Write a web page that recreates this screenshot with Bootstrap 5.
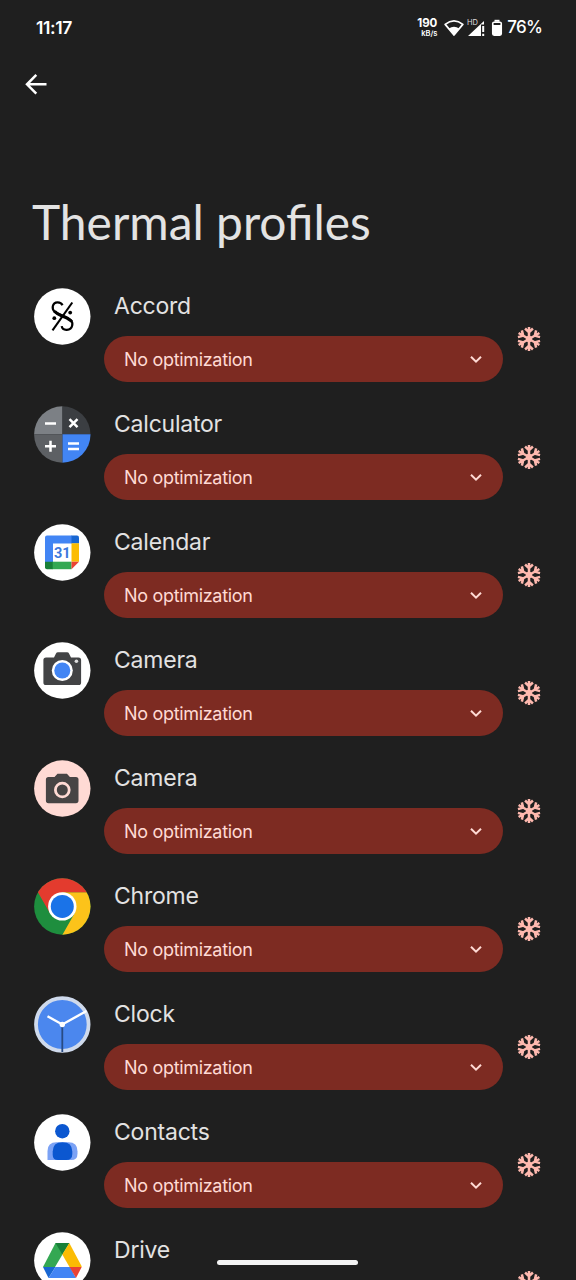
<!DOCTYPE html>
<html lang="en">
<head>
<meta charset="utf-8">
<meta name="viewport" content="width=device-width, initial-scale=1">
<title>Thermal profiles</title>
<link href="https://cdn.jsdelivr.net/npm/bootstrap@5.3.0/dist/css/bootstrap.min.css" rel="stylesheet">
<style>
html,body{height:100%;overflow:hidden}
body{background:#1f1f1f;color:#e3e2e2;font-family:Inter,"Liberation Sans",sans-serif}
svg{display:block;flex:none}
.screen{height:1280px;width:576px}
.statusbar{height:54px;padding:2px 34px 0 36px;color:#fff}
.clock{font-size:17.5px;font-weight:600;letter-spacing:-.4px}
.pct{font-size:17px;font-weight:500;letter-spacing:-.8px;margin-left:4px}
.net{font-size:11.5px;line-height:11px;font-weight:700;text-align:right;margin:1px 7px 0 0}
.net-unit{display:block;font-size:7.5px;line-height:10px;font-weight:600}
.toolbar{height:60px;padding-left:24px}
.title{height:174px;padding:85px 0 0 32px;font-family:Lato,sans-serif;font-size:47.9px;line-height:46px;font-weight:400;color:#e3e3e3;white-space:nowrap}
.app-row{height:118px;padding-left:34px}
.app-body{width:399px;margin-left:13px}
.app-name{height:48px;line-height:36px;padding-left:10px;font-size:23px;font-weight:400;letter-spacing:-.22px;white-space:nowrap}
.picker{height:46px;border:0;border-radius:23px;background:#7d2b22;color:#ffdad4;padding:0 20px;font-size:18px;letter-spacing:-.32px}
.flake{margin:39px 0 0 14px;color:#ffb9af}
.home{left:217px;top:1260px;width:141px;height:5px;background:#f4f4f4}
</style>
</head>
<body>
<svg width="0" height="0" class="position-absolute">
<symbol id="flake" viewBox="-12 -12 24 24"><g fill="none" stroke="currentColor" stroke-width="2.5">
<g id="arm"><path d="M0 0V-12M-3.900-10.500L0-6.700L3.900-10.500"/></g>
<use href="#arm" transform="rotate(60)"/><use href="#arm" transform="rotate(120)"/><use href="#arm" transform="rotate(180)"/><use href="#arm" transform="rotate(240)"/><use href="#arm" transform="rotate(300)"/></g><circle r="3.200" fill="currentColor"/></symbol>
<symbol id="chev" viewBox="0 0 14 10"><path d="M2 2.700l5 5 5-5" fill="none" stroke="#ffdad4" stroke-width="2"/></symbol>
</svg>
<div class="screen position-relative overflow-hidden">
<header class="statusbar d-flex align-items-center">
<span class="clock me-auto">11:17</span>
<div class="net">190<span class="net-unit">kB/s</span></div>
<svg width="20" height="18" viewBox="0 0 20 18"><path d="M1.200 5.400Q10-1.600 18.800 5.400L10 16z" fill="none" stroke="#fff" stroke-width="1.800" stroke-linejoin="round"/><path d="M4.800 9.400Q10 6 15.200 9.400L10 16z" fill="#fff"/></svg>
<svg width="20" height="18" viewBox="0 0 20 18" style="margin-left:3px"><path d="M1 17L17 2v3.500h-3V17z" fill="#fff"/><path d="M0 0h11v7H0z" fill="#1f1f1f"/><path d="M15.200 7h2v6h-2zM15.200 14.800h2V17h-2z" fill="#fff"/><text x="0" y="6.300" font-family="Inter" font-size="7.500" fill="#ddd">HD</text></svg>
<svg width="12" height="18" viewBox="0 0 12 18" class="ms-1"><path d="M3.500 .8h5v2h-5z" fill="#fff"/><rect x="1.700" y="3.200" width="8.600" height="13" rx="1.400" fill="#fff" stroke="#fff" stroke-width="1.500"/><path d="M2.600 4h6.800v2H2.600z" fill="#1f1f1f"/></svg>
<span class="pct">76%</span>
</header>
<div class="toolbar d-flex align-items-center"><svg width="24" height="24" viewBox="0 0 24 24"><path d="M22.500 12.300H3.200M12.300 2.900L3 12.300l9.300 9.400" fill="none" stroke="#fff" stroke-width="2.500"/></svg></div>
<h1 class="title m-0">Thermal profiles</h1>
<main>
<section class="app-row d-flex align-items-start">
<svg width="57" height="57" viewBox="0 0 57 57"><circle cx="28.300" cy="28.500" r="28.200" fill="#fff"/><g fill="none" stroke="#000"><path d="M28.500 17.200C27 13.700 20 12.800 18.800 18.200C17.700 24.300 24 25.500 29 28C35 31 39.400 32 38.200 37.500C37 43 28.500 43.300 27.700 38.200" stroke-width="2.200"/><path d="M20.500 23.200C23 26 26 26.800 29.500 28.500C33 30.100 36 31.200 37.600 33.700" stroke-width="3.200"/><path d="M38.300 14.500L18.500 42.300" stroke-width="2.100"/></g><circle cx="20.300" cy="30.200" r="1.900"/><circle cx="36.200" cy="24.600" r="1.900"/></svg>
<div class="app-body"><div class="app-name">Accord</div><button class="picker w-100 d-flex align-items-center justify-content-between"><span>No optimization</span><svg width="14" height="10"><use href="#chev"/></svg></button></div>
<svg class="flake" width="24" height="24"><use href="#flake"/></svg>
</section>
<section class="app-row d-flex align-items-start">
<svg width="57" height="57" viewBox="0 0 57 57"><clipPath id="disc"><circle cx="28.300" cy="28.500" r="28.200"/></clipPath><g clip-path="url(#disc)"><path d="M0 0h28.500v28.200H0z" fill="#7c8085"/><path d="M28.500 0H57v28.200H28.500z" fill="#3b3e42"/><path d="M0 28.200h28.500V57H0z" fill="#5d6064"/><path d="M28.500 28.200H57V57H28.500z" fill="#4285f4"/></g><path d="M11 17.500h11M35.500 13.200l8 8m0-8l-8 8M11 40.200h11M16.500 34.700v11M34 37.400h11M34 43h11" stroke="#fff" stroke-width="2.500"/></svg>
<div class="app-body"><div class="app-name">Calculator</div><button class="picker w-100 d-flex align-items-center justify-content-between"><span>No optimization</span><svg width="14" height="10"><use href="#chev"/></svg></button></div>
<svg class="flake" width="24" height="24"><use href="#flake"/></svg>
</section>
<section class="app-row d-flex align-items-start">
<svg width="57" height="57" viewBox="0 0 57 57"><circle cx="28.300" cy="28.500" r="28.200" fill="#fff"/><path d="M13 11.500h25v8H19v19h-8v-25a2 2 0 0 1 2-2z" fill="#4285f4"/><path d="M37.500 11.500H43a2 2 0 0 1 2 2v6h-7.500z" fill="#1967d2"/><path d="M37.500 19.300H45v18.400h-7.500z" fill="#fbbc04"/><path d="M11 37.700h8v7.500h-6a2 2 0 0 1-2-2z" fill="#188038"/><path d="M18.700 37.700h18.800v7.500H18.700z" fill="#34a853"/><path d="M37.500 37.700H45l-7.500 7.500z" fill="#ea4335"/><text x="28.300" y="33.800" text-anchor="middle" font-family="Roboto" font-weight="700" font-size="14.500" fill="#3c78dc">31</text></svg>
<div class="app-body"><div class="app-name">Calendar</div><button class="picker w-100 d-flex align-items-center justify-content-between"><span>No optimization</span><svg width="14" height="10"><use href="#chev"/></svg></button></div>
<svg class="flake" width="24" height="24"><use href="#flake"/></svg>
</section>
<section class="app-row d-flex align-items-start">
<svg width="57" height="57" viewBox="0 0 57 57"><circle cx="28.300" cy="28.500" r="28.200" fill="#fff"/><path d="M12 15.500h8l2-4q.5-1.300 2-1.300h9q1.500 0 2 1.300l2 4h7.500q2.600 0 2.600 2.600v22.300q0 2.600-2.600 2.600H12q-2.600 0-2.600-2.600V18.100q0-2.600 2.600-2.600z" fill="#424345"/><circle cx="28.300" cy="28.500" r="10.500" fill="#fff"/><circle cx="28.300" cy="28.500" r="8" fill="#4285f4"/><circle cx="42.400" cy="19.300" r="1.800" fill="#ddd"/></svg>
<div class="app-body"><div class="app-name">Camera</div><button class="picker w-100 d-flex align-items-center justify-content-between"><span>No optimization</span><svg width="14" height="10"><use href="#chev"/></svg></button></div>
<svg class="flake" width="24" height="24"><use href="#flake"/></svg>
</section>
<section class="app-row d-flex align-items-start">
<svg width="57" height="57" viewBox="0 0 57 57"><circle cx="28.300" cy="28.500" r="28.200" fill="#ffdad4"/><path d="M14.500 17h6l3-3.300h9.400l3 3.300h6q2.600 0 2.600 2.600v21q0 2.600-2.600 2.600H14.500q-2.600 0-2.600-2.600v-21q0-2.600 2.600-2.600z" fill="#474444"/><circle cx="28.300" cy="30" r="6.900" fill="none" stroke="#ffdad4" stroke-width="2.800"/></svg>
<div class="app-body"><div class="app-name">Camera</div><button class="picker w-100 d-flex align-items-center justify-content-between"><span>No optimization</span><svg width="14" height="10"><use href="#chev"/></svg></button></div>
<svg class="flake" width="24" height="24"><use href="#flake"/></svg>
</section>
<section class="app-row d-flex align-items-start">
<svg width="57" height="57" viewBox="0 0 57 57"><g clip-path="url(#disc)"><path d="M0 0h57v57H0z" fill="#1e8e3e"/><path d="M28.300 14.200H57V57H28.300L40.500 35.500z" fill="#fcc31a"/><path d="M3.900 14.200L0 0h57v14.200H28.300L16.100 35.500z" fill="#e33b2e"/></g><circle cx="28.300" cy="28.400" r="14.200" fill="#fff"/><circle cx="28.300" cy="28.400" r="11.500" fill="#1a73e8"/></svg>
<div class="app-body"><div class="app-name">Chrome</div><button class="picker w-100 d-flex align-items-center justify-content-between"><span>No optimization</span><svg width="14" height="10"><use href="#chev"/></svg></button></div>
<svg class="flake" width="24" height="24"><use href="#flake"/></svg>
</section>
<section class="app-row d-flex align-items-start">
<svg width="57" height="57" viewBox="0 0 57 57"><circle cx="28.300" cy="28.500" r="26.300" fill="#4b87ee" stroke="#cfdaec" stroke-width="3.800"/><path d="M28.300 28.500V56" stroke="#284b83" stroke-width="1.800"/><path d="M13.500 20.300l14.800 8.200L52.500 15" fill="none" stroke="#fff" stroke-width="2.400"/><circle cx="28.300" cy="28.500" r="2.700" fill="#fff"/></svg>
<div class="app-body"><div class="app-name">Clock</div><button class="picker w-100 d-flex align-items-center justify-content-between"><span>No optimization</span><svg width="14" height="10"><use href="#chev"/></svg></button></div>
<svg class="flake" width="24" height="24"><use href="#flake"/></svg>
</section>
<section class="app-row d-flex align-items-start">
<svg width="57" height="57" viewBox="0 0 57 57"><circle cx="28.300" cy="28.500" r="28.200" fill="#fff"/><path d="M13.500 46V37q0-8.800 9-8.800h12q9 0 9 9v2.500q0 6.300-6.300 6.300z" fill="#7ba2f5"/><path d="M18.700 37.500q0-9.300 9.800-9.300t9.800 9.300V40q0 6-6 6H24q-5.300 0-5.300-5z" fill="#0b57d0"/><circle cx="28.300" cy="17.200" r="7.200" fill="#0b57d0"/></svg>
<div class="app-body"><div class="app-name">Contacts</div><button class="picker w-100 d-flex align-items-center justify-content-between"><span>No optimization</span><svg width="14" height="10"><use href="#chev"/></svg></button></div>
<svg class="flake" width="24" height="24"><use href="#flake"/></svg>
</section>
<section class="app-row d-flex align-items-start">
<svg width="57" height="57" viewBox="0 0 57 57"><circle cx="28.300" cy="28.500" r="28.200" fill="#fff"/><path d="M21.500 11h13.800L21 35H9z" fill="#34a853"/><path d="M21.500 11h13.800l-7 11.500z" fill="#188038"/><path d="M35.300 11L47.500 34Q48 35 47.500 35H35.500L28.300 22.500z" fill="#fbbc04"/><path d="M9 35h12.500L14.500 46z" fill="#1967d2"/><path d="M21.500 35H36l6 11H14.500z" fill="#4285f4"/><path d="M35.500 35h12.200L42 46z" fill="#ea4335"/></svg>
<div class="app-body"><div class="app-name">Drive</div></div>
<svg class="flake" width="24" height="24"><use href="#flake"/></svg>
</section>
</main>
<div class="home position-absolute rounded-pill"></div>
</div>
<script src="https://cdn.jsdelivr.net/npm/bootstrap@5.3.0/dist/js/bootstrap.bundle.min.js"></script>
</body>
</html>
